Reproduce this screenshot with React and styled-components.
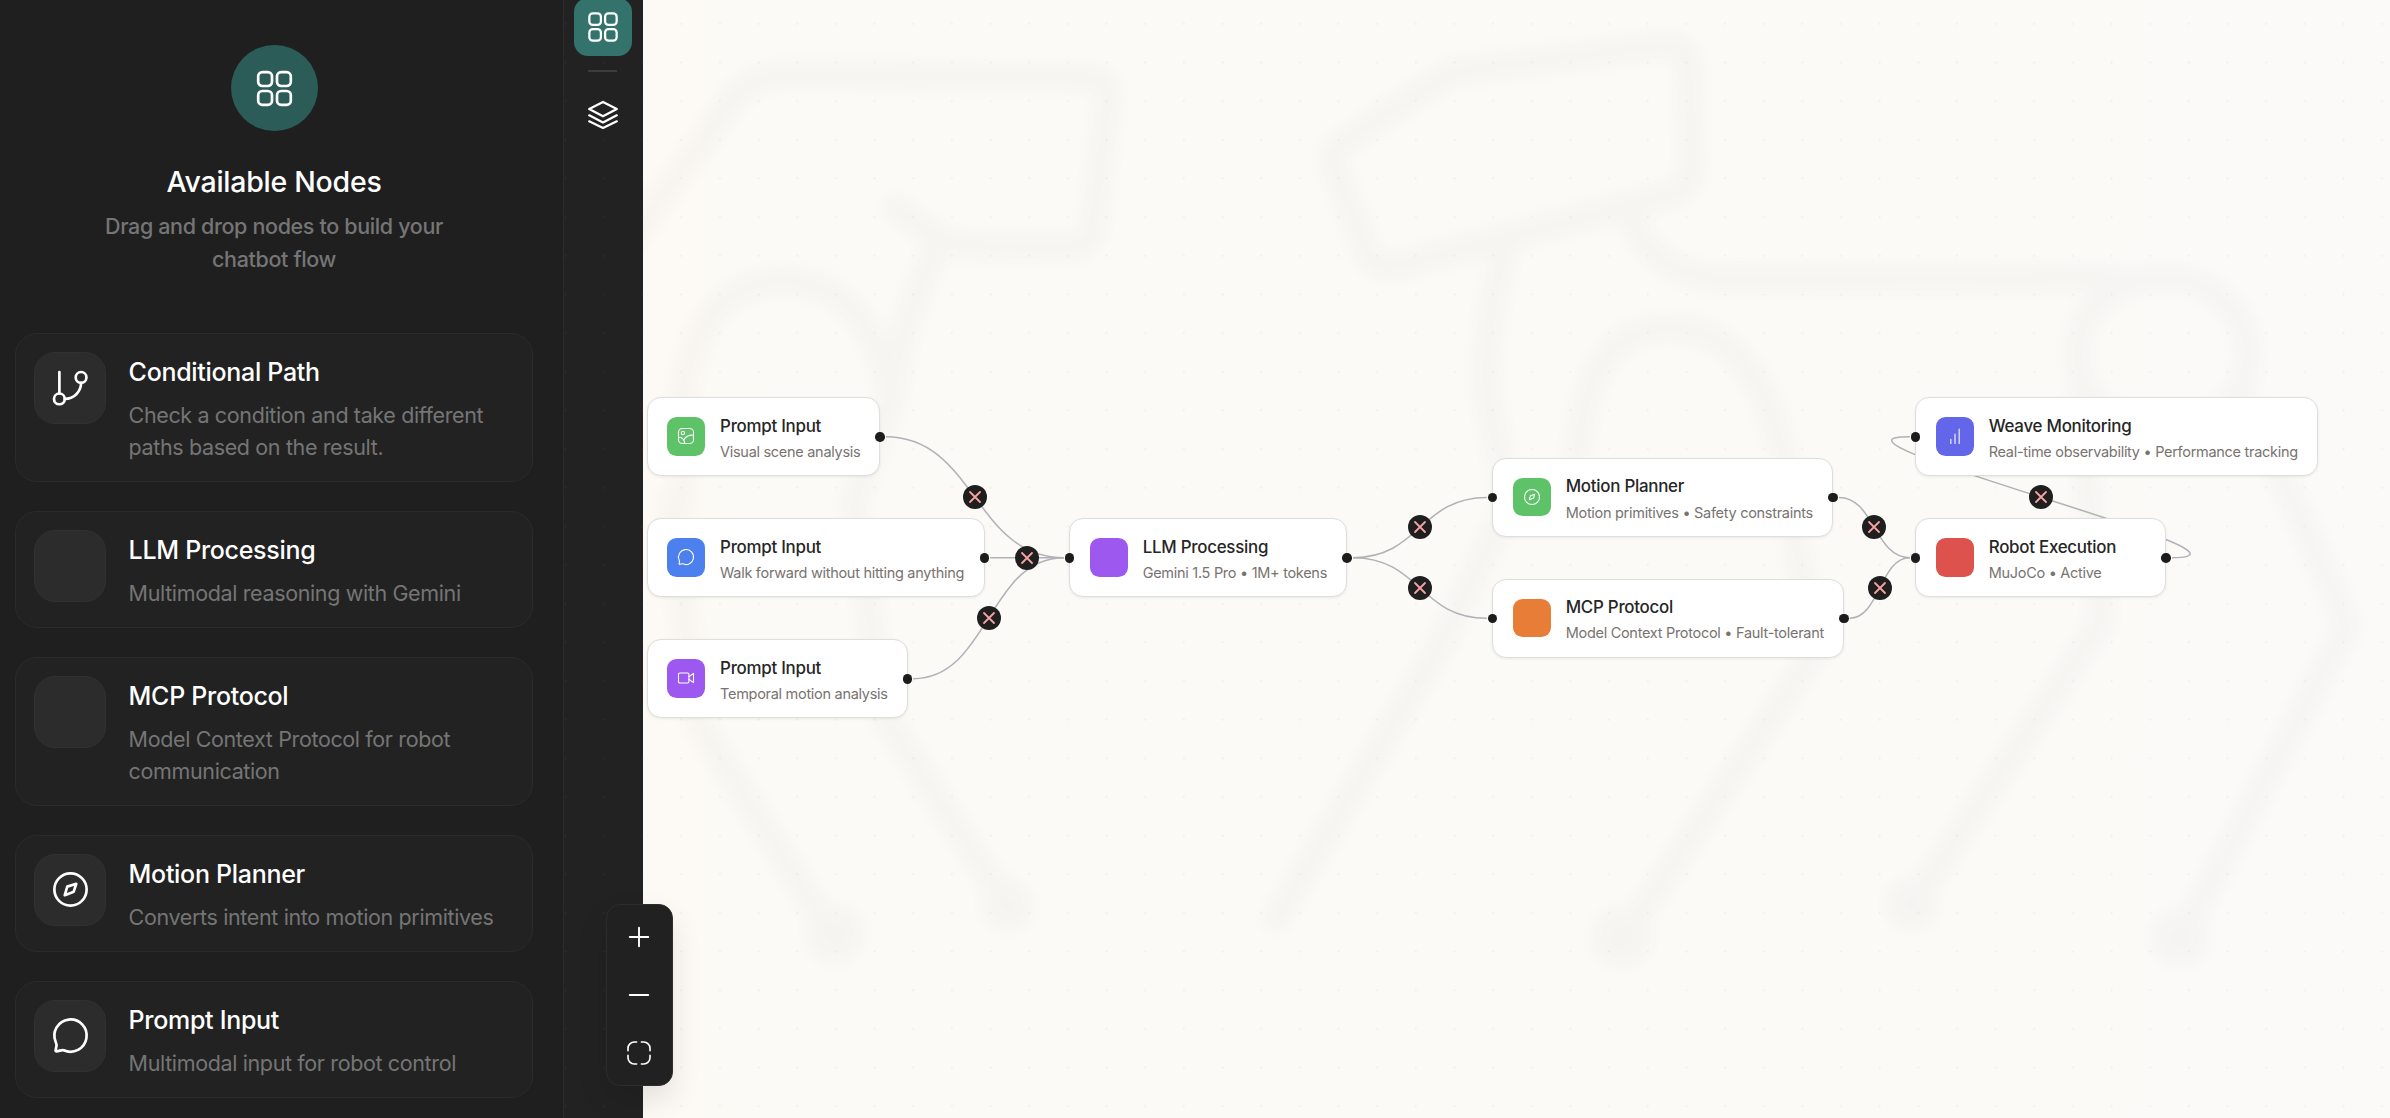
import React from "react";
import styled, { createGlobalStyle } from "styled-components";

const Global = createGlobalStyle`
  *, *::before, *::after { box-sizing: border-box; }
  html, body { margin: 0; padding: 0; overflow: hidden; }
  body { font-family: Inter, "Liberation Sans", sans-serif; background: #fbfaf6; }
`;

const Page = styled.div`
  position: relative;
  display: flex;
  width: 2390px;
  height: 1118px;
  overflow: hidden;
`;

const Sidebar = styled.aside`
  flex: 0 0 564px;
  display: flex;
  flex-direction: column;
  padding: 45px 30px 0 15px;
  background: #1f1f1f;
  border-right: 1px solid #2b2b2b;
`;

const Intro = styled.header`
  display: flex;
  flex-direction: column;
  align-items: center;
  height: 288px;
  flex: none;
`;

const IntroBadge = styled.div`
  display: grid;
  place-items: center;
  width: 87px;
  height: 86px;
  border-radius: 50%;
  background: #2b5c57;
`;

const IntroTitle = styled.h1`
  margin: 30px 0 0;
  font-size: 28.5px;
  line-height: 42px;
  font-weight: 500;
  letter-spacing: -0.009em;
  color: #fff;
`;

const IntroText = styled.p`
  margin: 6.5px 0 0;
  width: 370px;
  text-align: center;
  font-size: 21.5px;
  line-height: 33px;
  font-weight: 500;
  letter-spacing: -0.0165em;
  color: #757575;
`;

const CardList = styled.div`
  display: flex;
  flex-direction: column;
  gap: 29px;
`;

const Card = styled.article`
  display: flex;
  gap: 22.6px;
  padding: 18px 10px 17.3px 18px;
  min-height: 117px;
  border: 1px solid #2b2b2b;
  border-radius: 22px;
  background: #222222;
`;

const CardIcon = styled.div`
  flex: 0 0 72px;
  height: 72px;
  display: grid;
  place-items: center;
  border: 1px solid #313131;
  border-radius: 21px;
  background: #2c2c2c;
`;

const CardBody = styled.div`
  padding-top: 2px;
`;

const CardTitle = styled.h2`
  margin: 0;
  font-size: 25px;
  line-height: 37px;
  font-weight: 500;
  letter-spacing: -0.012em;
  color: #fff;
  white-space: nowrap;
`;

const CardText = styled.p`
  margin: 7.7px 0 0;
  width: 380px;
  font-size: 21.5px;
  line-height: 32.5px;
  letter-spacing: -0.017em;
  color: #757575;
`;

const Toolbar = styled.nav`
  flex: 0 0 79px;
  display: flex;
  flex-direction: column;
  align-items: center;
  padding-right: 2px;
  background: #222222;
`;

const ToolButton = styled.button`
  display: grid;
  place-items: center;
  width: 58px;
  height: 58px;
  margin: ${(p) => (p.$active ? "-2px 0 0" : "13px 0 0")};
  padding: 0;
  border: 0;
  border-radius: 14px;
  background: ${(p) => (p.$active ? "#34736c" : "transparent")};
`;

const ToolDivider = styled.hr`
  width: 29px;
  height: 2px;
  margin: 14px 0 0;
  border: 0;
  background: #3c3c3c;
`;

const Canvas = styled.main`
  flex: 1;
  background: linear-gradient(90deg, #fdfaf5 0%, #fbfaf6 10%, #fbfaf6 60%, #fbfaf8 100%);
`;

const Layer = styled.svg`
  position: absolute;
  left: 0;
  top: 0;
  width: 2390px;
  height: 1118px;
  pointer-events: none;
`;

const SketchLayer = styled(Layer)`
  left: -643px;
`;

const Backdrop = styled.div`
  position: absolute;
  left: 643px;
  top: 0;
  right: 0;
  bottom: 0;
  overflow: hidden;
`;

const DotGrid = styled.div`
  position: absolute;
  left: 564px;
  top: 0;
  right: 0;
  bottom: 0;
  background-image: radial-gradient(circle, rgba(128, 128, 128, 0.07) 1px, transparent 1.3px);
  background-size: 38.67px 38.67px;
  background-position: -18px 4.5px;
  pointer-events: none;
`;

const NodeBox = styled.section`
  position: absolute;
  left: ${(p) => p.$x}px;
  top: ${(p) => p.$y}px;
  width: ${(p) => p.$w}px;
  height: 79px;
  display: flex;
  align-items: center;
  gap: 14.7px;
  padding-left: 19.3px;
  border: 1px solid #dededb;
  border-radius: 14px;
  background: #fff;
  box-shadow: 0 1px 3px rgba(0, 0, 0, 0.07);
`;

const NodeIcon = styled.div`
  flex: 0 0 38.4px;
  height: 38.4px;
  display: grid;
  place-items: center;
  border-radius: 9.6px;
  background: ${(p) => p.$color};
`;

const NodeBody = styled.div`
  padding-top: 0.4px;
`;

const NodeTitle = styled.div`
  font-size: 16.9px;
  line-height: 26px;
  font-weight: 500;
  letter-spacing: -0.015em;
  color: #262626;
  white-space: nowrap;
`;

const NodeText = styled.div`
  font-size: 14.5px;
  line-height: 19px;
  letter-spacing: -0.02em;
  margin-top: 3.4px;
  color: #78736f;
  white-space: nowrap;
`;

const Port = styled.i`
  position: absolute;
  top: 50%;
  ${(p) => p.$side}: -5.5px;
  width: 9.6px;
  height: 9.6px;
  margin-top: -4.6px;
  border-radius: 50%;
  background: #1c1c1c;
`;

const EdgeButton = styled.button`
  position: absolute;
  left: ${(p) => p.$x - 12}px;
  top: ${(p) => p.$y - 12}px;
  width: 24px;
  height: 24px;
  display: grid;
  place-items: center;
  padding: 0;
  border: 0;
  border-radius: 50%;
  background: #1f1f1f;
`;

const Controls = styled.div`
  position: absolute;
  left: 606px;
  top: 904px;
  width: 67px;
  height: 182px;
  display: flex;
  flex-direction: column;
  align-items: center;
  padding: 3px 1px 3px 0;
  border: 1px solid #2d2d2d;
  border-radius: 14px;
  background: #212121;
  box-shadow: 0 14px 30px rgba(0, 0, 0, 0.1);
`;

const ControlButton = styled.button`
  width: 58px;
  height: 58px;
  display: grid;
  place-items: center;
  padding: 0;
  border: 0;
  background: none;
`;

const Stroke = ({ size, width = 1.5, color = "#fff", children }) => (
  <svg width={size} height={size} viewBox="0 0 24 24" fill="none" stroke={color}
    strokeWidth={width} strokeLinecap="round" strokeLinejoin="round">{children}</svg>
);

const GridIcon = ({ size }) => (
  <Stroke size={size}>
    <rect x="2.9" y="2.9" width="7.7" height="7.7" rx="2.3" />
    <rect x="13.4" y="2.9" width="7.7" height="7.7" rx="2.3" />
    <rect x="2.9" y="13.4" width="7.7" height="7.7" rx="2.3" />
    <rect x="13.4" y="13.4" width="7.7" height="7.7" rx="2.3" />
  </Stroke>
);

const LayersIcon = ({ size }) => (
  <Stroke size={size}>
    <path d="M12 4 21.2 8.7 12 13.5 2.8 8.7Z" />
    <path d="M2.8 12.9 12 17.6 21.2 12.9" />
    <path d="M2.8 16.9 12 21.3 21.2 16.9" />
  </Stroke>
);

const BranchIcon = ({ size }) => (
  <Stroke size={size}>
    <circle cx="5.8" cy="17.8" r="3" />
    <circle cx="17.9" cy="5.8" r="3" />
    <path d="M5.8 2.8v12M17.9 8.8c0 5-4 9-9.1 9" />
  </Stroke>
);

const CompassIcon = ({ size, width }) => (
  <Stroke size={size} width={width}>
    <circle cx="12" cy="12" r="9" />
    <path d="M15.2 8.8 13.8 13.2 8.8 15.2 10.2 10.4Z" />
  </Stroke>
);

const ChatIcon = ({ size, width }) => (
  <Stroke size={size} width={width}>
    <path d="M3.7 15.5A9 9 0 1 1 8.2 20.2C7 19.8 5.3 21 3.9 20.8 3.3 20.7 4.3 18.4 4.2 17.3 4.15 16.7 3.9 16.1 3.7 15.5Z" />
  </Stroke>
);

const ImageIcon = ({ size, width }) => (
  <Stroke size={size} width={width}>
    <rect x="3" y="3" width="18" height="18" rx="4.5" />
    <circle cx="8.3" cy="8.3" r="2" />
    <path d="M3 13.5c4 0 7 3 7.3 7.5M9.5 16.5c2-3.5 6-6 11.5-5.5" />
  </Stroke>
);

const VideoIcon = ({ size, width }) => (
  <Stroke size={size} width={width}>
    <rect x="3" y="6" width="12.5" height="12" rx="1.5" />
    <path d="M15.5 10.5 21 6.5v11l-5.5-4" />
  </Stroke>
);

const BarsIcon = ({ size, width }) => (
  <Stroke size={size} width={width}>
    <path d="M7 16v5M12 9.5V21M17 3.5V21" />
  </Stroke>
);

const PlusIcon = () => (<Stroke size={30}><path d="M4.6 12h14.8M12 4.6v14.8" /></Stroke>);
const MinusIcon = () => (<Stroke size={30}><path d="M4.6 12h14.8" /></Stroke>);
const FitIcon = () => (
  <Stroke size={30} width={1.3}>
    <path d="M10.1 3.2H8.2A5 5 0 0 0 3.2 8.2v1.9M13.9 3.2h1.9a5 5 0 0 1 5 5v1.9M20.8 13.9v1.9a5 5 0 0 1-5 5h-1.9M10.1 20.8H8.2a5 5 0 0 1-5-5v-1.9" />
  </Stroke>
);

const palette = [
  { title: "Conditional Path", text: "Check a condition and take different paths based on the result.", icon: <BranchIcon size={43} /> },
  { title: "LLM Processing", text: "Multimodal reasoning with Gemini" },
  { title: "MCP Protocol", text: "Model Context Protocol for robot communication" },
  { title: "Motion Planner", text: "Converts intent into motion primitives", icon: <CompassIcon size={43} /> },
  { title: "Prompt Input", text: "Multimodal input for robot control", icon: <ChatIcon size={43} /> },
];

const nodes = [
  { x: 646.7, y: 397, w: 233.6, color: "#5ec269", title: "Prompt Input", text: "Visual scene analysis", icon: <ImageIcon size={20} width={1.3} />, out: true },
  { x: 646.7, y: 518, w: 338, color: "#4b80ee", title: "Prompt Input", text: "Walk forward without hitting anything", icon: <ChatIcon size={20} width={1.3} />, out: true },
  { x: 646.7, y: 639, w: 261, color: "#9d58ef", title: "Prompt Input", text: "Temporal motion analysis", icon: <VideoIcon size={20} width={1.3} />, out: true },
  { x: 1069.3, y: 518, w: 278.2, color: "#9d58ef", title: "LLM Processing", text: "Gemini 1.5 Pro • 1M+ tokens", in: true, out: true },
  { x: 1492.3, y: 457.7, w: 341.2, color: "#5ec269", title: "Motion Planner", text: "Motion primitives • Safety constraints", icon: <CompassIcon size={20} width={1.3} />, in: true, out: true },
  { x: 1492.3, y: 578.6, w: 351.8, color: "#e77d37", title: "MCP Protocol", text: "Model Context Protocol • Fault-tolerant", in: true, out: true },
  { x: 1915.3, y: 397, w: 402.7, color: "#6366e8", title: "Weave Monitoring", text: "Real-time observability • Performance tracking", icon: <BarsIcon size={20} width={1.3} />, in: true },
  { x: 1915.3, y: 518, w: 251.2, color: "#dd524c", title: "Robot Execution", text: "MuJoCo • Active", in: true, out: true },
];

const links = [[0, 3], [1, 3], [2, 3], [3, 4], [3, 5], [4, 7], [5, 7], [7, 6]];

const edges = links.map(([from, to]) => {
  const a = nodes[from];
  const b = nodes[to];
  const sx = a.x + a.w + 5.5;
  const sy = a.y + 39.7;
  const tx = b.x - 5.5;
  const ty = b.y + 39.7;
  const dist = tx - sx;
  const bend = dist >= 0 ? dist / 2 : 6.25 * Math.sqrt(-dist * 1.35);
  return {
    d: `M${sx} ${sy}C${sx + bend} ${sy} ${tx - bend} ${ty} ${tx} ${ty}`,
    mx: (sx + tx) / 2,
    my: (sy + ty) / 2 - 0.2,
  };
});

const RobotSketch = () => (
  <SketchLayer>
    <defs>
      <filter id="soft" x="-10%" y="-10%" width="120%" height="120%">
        <feGaussianBlur stdDeviation="5" />
      </filter>
    </defs>
    <g opacity="0.027">
      <g transform="scale(1.5242)" fill="none" stroke="#55555a" strokeWidth="17"
        strokeLinecap="round" strokeLinejoin="round" filter="url(#soft)">
        <path d="M412 160 480 66Q492 50 515 49L715 51Q728 52 727 64L717 150Q716 162 702 162L632 161Q614 159 588 136" />
        <path d="M612 168Q588 220 585 260L560 330 580 470 661 594" />
        <path d="M448 330V262Q455 190 510 184Q570 184 585 260" />
        <path d="M440 330 457 472 545 612" />
        <path d="M875 100Q880 92 954 47L1090 30Q1107 28 1108 44L1110 110Q1110 122 1095 128L915 175Q903 178 898 168L876 112Q872 104 875 100Z" />
        <path d="M988 160Q972 220 976 262L990 330 947 420 837 603" />
        <path d="M1068 136Q1080 180 1130 183L1386 182" />
        <path d="M1035 300Q1040 215 1095 215Q1155 215 1172 310L1189 430 1064 617" />
        <ellipse cx="1419" cy="232" rx="56" ry="50" />
        <path d="M1364 260 1379 407 1254 594" />
        <path d="M1472 262Q1515 350 1540 411L1430 617" />
        <g fill="#55555a" stroke="none">
          <circle cx="548" cy="613" r="19" />
          <circle cx="661" cy="594" r="17" />
          <circle cx="1064" cy="615" r="20" />
          <circle cx="1254" cy="593" r="17" />
          <circle cx="1430" cy="615" r="19" />
        </g>
      </g>
    </g>
  </SketchLayer>
);

export default function App() {
  return (
    <>
      <Global />
      <Page>
        <Sidebar>
          <Intro>
            <IntroBadge><GridIcon size={43} /></IntroBadge>
            <IntroTitle>Available Nodes</IntroTitle>
            <IntroText>Drag and drop nodes to build your chatbot flow</IntroText>
          </Intro>
          <CardList>
            {palette.map((c) => (
              <Card key={c.title}>
                <CardIcon>{c.icon}</CardIcon>
                <CardBody>
                  <CardTitle>{c.title}</CardTitle>
                  <CardText>{c.text}</CardText>
                </CardBody>
              </Card>
            ))}
          </CardList>
        </Sidebar>
        <Toolbar>
          <ToolButton $active aria-label="Nodes"><GridIcon size={36} /></ToolButton>
          <ToolDivider />
          <ToolButton aria-label="Layers"><LayersIcon size={36} /></ToolButton>
        </Toolbar>
        <Canvas />
        <Backdrop><RobotSketch /></Backdrop>
        <DotGrid />
        <Layer>
          {edges.map((e) => (
            <path key={e.d} d={e.d} fill="none" stroke="#b1b1b7" strokeWidth="1.5" />
          ))}
        </Layer>
        {nodes.map((n) => (
          <NodeBox key={n.text} $x={n.x} $y={n.y} $w={n.w}>
            <NodeIcon $color={n.color}>{n.icon}</NodeIcon>
            <NodeBody>
              <NodeTitle>{n.title}</NodeTitle>
              <NodeText>{n.text}</NodeText>
            </NodeBody>
            {n.in && <Port $side="left" />}
            {n.out && <Port $side="right" />}
          </NodeBox>
        ))}
        {edges.map((e) => (
          <EdgeButton key={e.d} $x={e.mx} $y={e.my} aria-label="Remove link">
            <Stroke size={16} width={2.7} color="#f5a3a3"><path d="M4.5 4.5l15 15M19.5 4.5l-15 15" /></Stroke>
          </EdgeButton>
        ))}
        <Controls>
          <ControlButton aria-label="Zoom in"><PlusIcon /></ControlButton>
          <ControlButton aria-label="Zoom out"><MinusIcon /></ControlButton>
          <ControlButton aria-label="Fit view"><FitIcon /></ControlButton>
        </Controls>
      </Page>
    </>
  );
}
